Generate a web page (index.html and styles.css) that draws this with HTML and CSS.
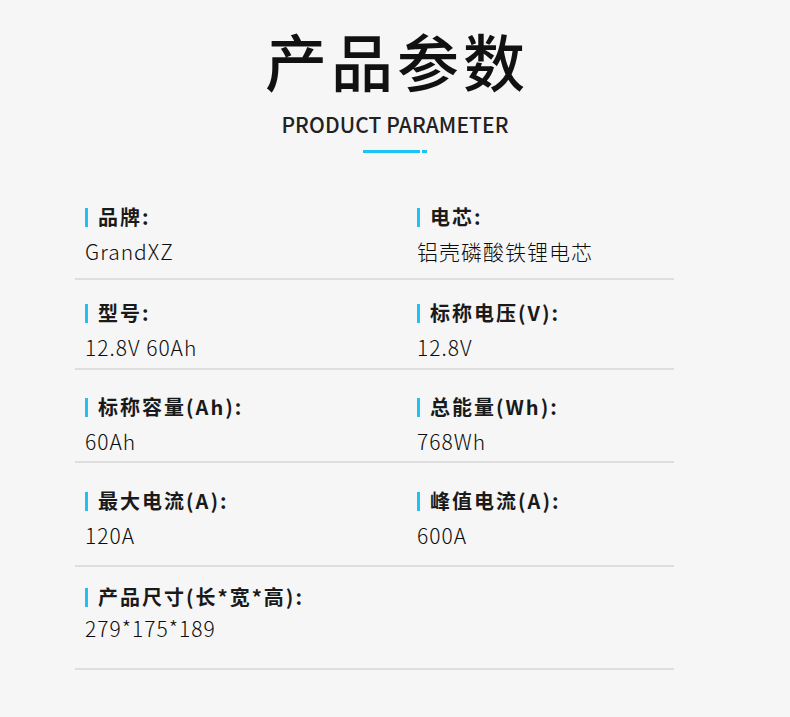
FILE: index.html
```html
<!DOCTYPE html>
<html lang="zh-CN">
<head>
    <meta charset="UTF-8">
    <meta name="viewport" content="width=device-width, initial-scale=1.0">
    <title>产品参数</title>
    <link rel="stylesheet" href="styles.css">
</head>
<body>
    <div class="head">
        <h1>产品参数</h1>
        <p class="sub">PRODUCT PARAMETER</p>
        <div class="line"><span class="long"></span><span class="short"></span></div>
    </div>

    <div class="params">
        <div class="row row-1">
            <div class="cell">
                <div class="label">品牌:</div>
                <div class="value">GrandXZ</div>
            </div>
            <div class="cell">
                <div class="label">电芯:</div>
                <div class="value">铝壳磷酸铁锂电芯</div>
            </div>
        </div>
        <div class="row row-2">
            <div class="cell">
                <div class="label">型号:</div>
                <div class="value">12.8V 60Ah</div>
            </div>
            <div class="cell">
                <div class="label">标称电压(V):</div>
                <div class="value">12.8V</div>
            </div>
        </div>
        <div class="row row-3">
            <div class="cell">
                <div class="label">标称容量(Ah):</div>
                <div class="value">60Ah</div>
            </div>
            <div class="cell">
                <div class="label">总能量(Wh):</div>
                <div class="value">768Wh</div>
            </div>
        </div>
        <div class="row row-4">
            <div class="cell">
                <div class="label">最大电流(A):</div>
                <div class="value">120A</div>
            </div>
            <div class="cell">
                <div class="label">峰值电流(A):</div>
                <div class="value">600A</div>
            </div>
        </div>
        <div class="row row-5">
            <div class="cell">
                <div class="label">产品尺寸(长*宽*高):</div>
                <div class="value">279*175*189</div>
            </div>
        </div>
    </div>
</body>
</html>
```

FILE: styles.css
```css
* {
    box-sizing: border-box;
    margin: 0;
    padding: 0;
}
body {
    background: #f6f6f6;
    color: #1a1a1a;
    font-family: "Noto Sans CJK SC", "Noto Sans", sans-serif;
    width: 790px;
    height: 717px;
    overflow: hidden;
}
.head {
    display: flex;
    flex-direction: column;
    align-items: center;
    padding-top: 29px;
}
h1 {
    font-size: 62px;
    line-height: 62px;
    font-weight: 500;
    letter-spacing: 4px;
    margin-right: -4px;
    color: #111;
}
.sub {
    margin-top: 21px;
    font-size: 21px;
    line-height: 24px;
    font-weight: 500;
    letter-spacing: 0.1px;
    color: #222;
}
.line {
    margin-top: 14px;
    display: flex;
    gap: 2px;
}
.line span {
    height: 3px;
    background: #1cc3f4;
}
.line .long { width: 57px; }
.line .short { width: 5px; }

.params {
    margin-left: 75px;
    width: 599px;
    margin-top: 51px;
}
.row {
    display: grid;
    grid-template-columns: 332px 1fr;
    padding-left: 10px;
    border-bottom: 2px solid #dedede;
}
.row-1 { padding-top: 0; padding-bottom: 12px; }
.row-2 { padding-top: 20px; padding-bottom: 6px; }
.row-3 { padding-top: 24px; padding-bottom: 5px; }
.row-4 { padding-top: 25px; padding-bottom: 15px; }
.row-5 { padding-top: 17px; padding-bottom: 25px; }

.label {
    display: flex;
    align-items: center;
    gap: 10px;
    font-size: 20px;
    line-height: 26px;
    font-weight: 700;
    letter-spacing: 2px;
    color: #1a1a1a;
}
.label::before {
    content: "";
    width: 3px;
    height: 19px;
    background: #1cc3f4;
}
.value {
    margin-top: 6px;
    font-size: 21px;
    line-height: 30px;
    font-weight: 300;
    letter-spacing: 1px;
    color: #0d0d0d;
}
.row-5 .value { margin-top: 3px; }
```
